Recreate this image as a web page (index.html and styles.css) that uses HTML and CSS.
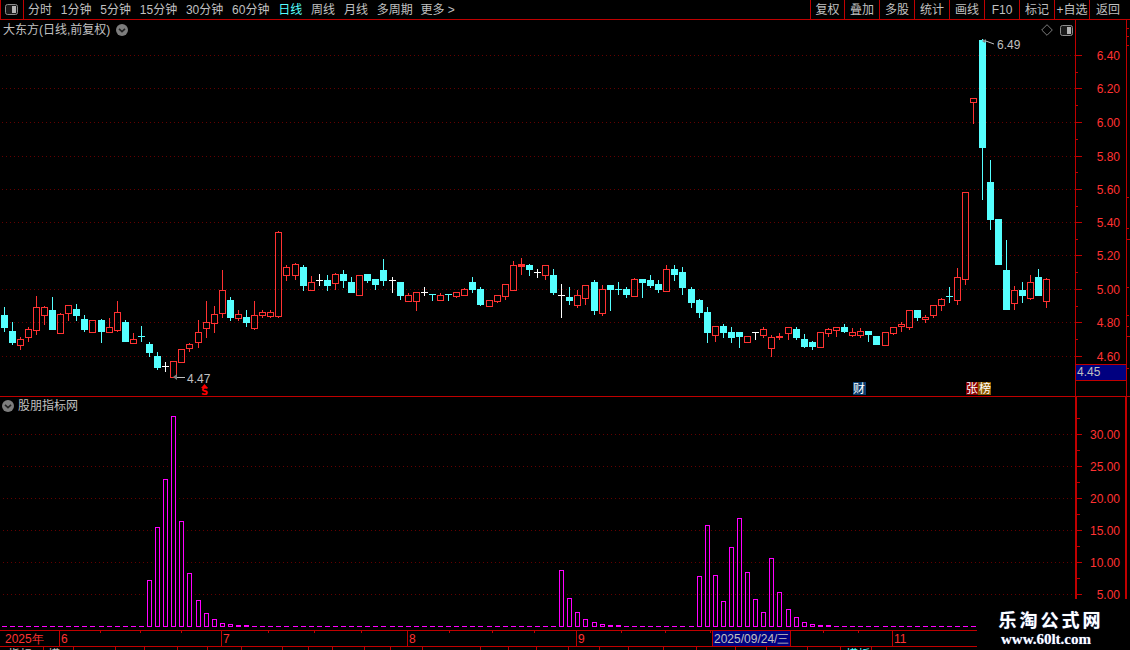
FILE: index.html
```html
<!DOCTYPE html>
<html lang="zh">
<head>
<meta charset="utf-8">
<title>大东方 日线</title>
<link rel="stylesheet" href="styles.css">
</head>
<body>
<div class="app">
  <header class="toolbar">
    <div class="toggle">
      <svg class="icon-pane" width="14" height="11" viewBox="0 0 14 11"><rect x="1.5" y="0.5" width="12" height="10" rx="2" fill="#1a1a1a" stroke="#8c8c8c"/><rect x="8" y="2" width="4" height="7" fill="#b4b4b4"/></svg>
    </div>
    <nav class="periods">
      <span>分时</span><span>1分钟</span><span>5分钟</span><span>15分钟</span><span>30分钟</span><span>60分钟</span>
      <span class="active">日线</span><span>周线</span><span>月线</span><span>多周期</span><span class="more">更多 &gt;</span>
    </nav>
    <div class="actions">
      <span class="first">复权</span><span>叠加</span><span>多股</span><span>统计</span><span>画线</span><span>F10</span><span>标记</span><span>+自选</span><span class="last">返回</span>
    </div>
  </header>

  <section class="panel price">
    <svg id="price" class="chart" width="1130" height="376" viewBox="0 20 1130 376"></svg>
    <div class="title title-price">
      <span>大东方(日线,前复权)</span>
      <svg class="chev" width="12" height="12" viewBox="0 0 12 12"><circle cx="6" cy="6" r="6" fill="#7d7d7d"/><path d="M3 4.8 6 7.6 9 4.8" fill="none" stroke="#222" stroke-width="1.6"/></svg>
    </div>
    <div class="corner">
      <svg width="12" height="12" viewBox="0 0 12 12"><path d="M6 .7 11.3 6 6 11.3 .7 6Z" fill="none" stroke="#7d7d7d"/></svg>
      <svg width="13" height="11" viewBox="0 0 13 11"><rect x="0.5" y="0.5" width="12" height="10" rx="2" fill="#1a1a1a" stroke="#8c8c8c"/><rect x="7" y="2" width="4" height="7" fill="#b4b4b4"/></svg>
    </div>
  </section>

  <section class="panel indicator">
    <svg id="indicator" class="chart" width="1130" height="233" viewBox="0 397 1130 233"></svg>
    <div class="title title-indicator">
      <svg class="chev" width="12" height="12" viewBox="0 0 12 12"><circle cx="6" cy="6" r="6" fill="#7d7d7d"/><path d="M3 4.8 6 7.6 9 4.8" fill="none" stroke="#222" stroke-width="1.6"/></svg>
      <span>股朋指标网</span>
    </div>
  </section>

  <section class="panel time">
    <svg id="time" class="chart" width="1130" height="20" viewBox="0 630 1130 20"></svg>
  </section>

  <aside class="watermark">
    <div class="wm-name">乐淘公式网</div>
    <div class="wm-url">www.60lt.com</div>
  </aside>
</div>
<script src="chart.js"></script>
</body>
</html>
```
FILE: styles.css
```css
html, body {
  margin: 0;
  padding: 0;
  background: #000;
}
body {
  width: 1130px;
  height: 650px;
  overflow: hidden;
  font-family: "Liberation Sans", "Noto Sans CJK SC", sans-serif;
  font-size: 12px;
  color: #c0c0c0;
}
.app {
  position: relative;
  display: flex;
  flex-direction: column;
  width: 1130px;
  height: 650px;
}
.toolbar {
  display: flex;
  align-items: stretch;
  height: 19px;
  line-height: 20px;
  border-bottom: 1px solid #c00000;
  white-space: nowrap;
}
.toggle {
  display: flex;
  align-items: center;
  justify-content: center;
  width: 22px;
  border-left: 1px solid #c00000;
  border-right: 1px solid #c00000;
}
.icon-pane {
  margin-left: -2px;
}
.periods {
  display: flex;
  gap: 8.8px;
  padding-left: 4px;
}
.periods .active {
  color: #55ffff;
}
.periods .more {
  margin-left: -1px;
}
.actions {
  display: flex;
  margin-left: auto;
}
.actions span {
  width: 34px;
  text-align: center;
  border-left: 1px solid #c00000;
}
.actions .first {
  width: 33px;
}
.actions .last {
  width: 36px;
  padding-right: 4px;
}
.panel {
  position: relative;
}
.chart {
  display: block;
}
.price {
  height: 376px;
  border-bottom: 1px solid #c00000;
}
.indicator {
  height: 233px;
}
.time {
  height: 20px;
}
.title {
  position: absolute;
  display: flex;
  align-items: center;
  height: 14px;
  line-height: 14px;
}
.title-price {
  left: 3px;
  top: 3px;
  gap: 6px;
}
.title-indicator {
  left: 2px;
  top: 2px;
  gap: 4px;
}
.corner {
  position: absolute;
  left: 1041px;
  top: 4px;
  display: flex;
  align-items: center;
  gap: 7px;
}
.watermark {
  position: absolute;
  left: 977px;
  top: 599px;
  width: 153px;
  height: 51px;
  background: #000;
  color: #fff;
  text-align: center;
}
.wm-name {
  margin-top: 9px;
  padding-right: 5px;
  font-family: "Noto Sans CJK SC", sans-serif;
  font-size: 18px;
  font-weight: 700;
  line-height: 22px;
  letter-spacing: 3px;
  text-shadow: 0 0 1px #5a78c8;
}
.wm-url {
  margin-top: 1px;
  padding-right: 15px;
  font-family: "Liberation Serif", serif;
  font-size: 15px;
  font-weight: 700;
  line-height: 17px;
  text-shadow: 0 0 1px #5a78c8;
}
.ax {
  font-family: "Liberation Sans", sans-serif;
  font-size: 12px;
  fill: #ff3232;
}
.note {
  font-family: "Liberation Sans", sans-serif;
  font-size: 12px;
  fill: #c0c0c0;
}
.badge {
  font-family: "Noto Sans CJK SC", sans-serif;
  font-size: 12px;
  fill: #fff;
}
.sig {
  font-family: "DejaVu Sans", sans-serif;
  font-size: 10px;
  font-weight: 700;
  fill: #ff0000;
}
.tab {
  font-family: "Noto Sans CJK SC", sans-serif;
  font-size: 12px;
  fill: #c0c0c0;
}
.tab-on {
  fill: #55ffff;
}
```
FILE: chart.js
```js
var RED = '#ff3232', CYAN = '#55ffff', WHITE = '#ffffff', MAG = '#ff00ff';
var LINE = '#c00000', DOT = '#640000';

// [type, body top, body bottom, wick top, wick bottom]; r hollow red, c cyan, w white cross, d cyan cross, s solid red
var candles = [
['c',315,327,307,331],['c',331,342,322,344],['r',339,345,337,349],['r',329,337,327,341],['r',307,330,296,334],
['r',307,315,306,324],['c',310,329,297,329],['r',314,333,313,333],['r',305,313,305,320],['c',309,315,304,320],
['c',319,329,315,331],['r',320,332,320,332],['c',320,331,319,342],['r',327,332,318,332],['r',312,330,301,331],
['c',322,341,320,341],['r',339,343,333,343],['d',336,336,326,341],['c',344,352,342,356],['c',356,367,352,369],
['w',366,366,362,371],['r',361,377,361,377],['r',349,362,349,362],['r',344,348,343,351],['r',332,342,320,347],
['r',322,328,301,337],['r',314,323,306,332],['r',290,313,270,317],['c',300,317,297,320],['r',314,318,310,320],
['c',317,322,310,326],['r',315,328,301,329],['r',312,315,310,317],['r',312,316,310,317],['r',232,316,231,317],
['r',267,275,265,280],['r',264,275,263,279],['c',267,285,265,290],['r',282,290,276,290],['w',280,280,274,285],
['c',280,285,275,290],['r',274,283,273,289],['c',274,280,270,287],['c',282,292,277,292],['r',275,295,275,295],
['c',274,280,274,282],['c',279,284,279,289],['c',270,280,259,285],['w',280,280,277,292],['c',282,295,282,299],
['r',295,301,293,301],['r',292,301,292,310],['w',292,292,287,295],['d',294,294,294,300],['r',295,300,293,300],
['d',294,294,294,300],['r',292,296,292,297],['r',289,295,288,295],['c',282,289,277,292],['c',289,304,287,305],
['r',300,306,300,306],['r',295,301,295,302],['r',284,296,284,299],['r',265,290,261,290],['s',264,266,258,274],
['c',265,269,264,275],['w',272,272,269,277],['r',265,275,265,279],['c',275,292,269,294],['w',295,295,284,317],
['c',297,300,287,304],['r',295,305,290,307],['r',285,298,285,304],['c',282,310,280,314],['r',289,313,285,315],
['c',285,289,285,310],['d',289,289,282,294],['c',289,294,287,297],['r',279,296,278,296],['c',279,282,279,297],
['c',280,285,275,287],['c',284,289,280,292],['r',269,291,265,291],['c',269,274,265,280],['c',272,287,267,294],
['c',289,302,287,307],['c',300,312,299,317],['c',312,332,307,342],['r',326,335,326,341],['c',326,332,324,337],
['c',332,337,327,342],['c',332,336,332,347],['r',336,342,336,342],['w',332,332,332,339],['r',329,335,327,337],
['r',337,348,335,356],['s',336,337,333,339],['r',327,333,327,339],['c',329,337,327,339],['c',339,346,334,347],
['c',342,346,341,349],['r',332,347,332,347],['r',329,333,328,336],['r',327,330,327,336],['c',327,331,324,332],
['r',332,335,328,336],['r',331,335,328,337],['c',331,334,331,341],['c',336,344,336,344],['r',332,345,332,345],
['r',327,333,327,334],['r',324,326,322,331],['r',310,327,310,329],['c',310,317,310,320],['r',317,319,315,322],
['r',305,315,305,317],['r',299,305,298,310],['d',296,296,287,302],['r',277,300,268,304],['r',192,279,192,284],
['r',98,102,98,123],['c',40,147,39,199],['c',182,219,160,229],['c',219,264,219,264],['c',270,309,240,309],
['r',290,303,286,309],['c',290,295,282,302],['r',282,298,275,299],['c',277,295,269,295],['r',279,301,278,307]
];

// top row of each indicator bar, by candle index (others are flat at the baseline)
var bars = {18:580,19:527,20:479,21:416,22:521,23:573,24:600,25:613,26:619,27:623,28:624,29:625,30:625,
69:570,70:598,71:612,72:619,73:622,74:624,75:625,76:625,
86:576,87:525,88:575,89:601,90:547,91:518,92:572,93:599,94:612,95:558,96:592,97:609,98:617,99:622,100:624,101:625,102:625};

function cx(i) { return 4 + 8 * i + (i < 61 ? Math.floor(i / 12) : Math.floor((i - 1) / 12)); }
function R(x, y, w, h, f) { return '<rect x="' + x + '" y="' + y + '" width="' + w + '" height="' + h + '" fill="' + f + '"/>'; }
function box(x, y, w, h, s) { return '<rect x="' + (x + .5) + '" y="' + (y + .5) + '" width="' + w + '" height="' + h + '" fill="none" stroke="' + s + '"/>'; }
function T(x, y, s, c, extra) { return '<text x="' + x + '" y="' + y + '" class="' + c + '"' + (extra || '') + '>' + s + '</text>'; }
function dots(y, x0, x1) { var o = ''; for (var x = x0; x < x1; x += 4) o += R(x, y, 1, 1, DOT); return o; }

function drawPrice() {
  var o = '', g = [[55,'6.40'],[88,'6.20'],[122,'6.00'],[156,'5.80'],[189,'5.60'],[222,'5.40'],[255,'5.20'],[289,'5.00'],[322,'4.80'],[356,'4.60']];
  g.forEach(function (p) {
    o += dots(p[0], 2, 1075);
    o += R(1075, p[0], 7, 1, LINE);
    o += T(1120, p[0] + 5, p[1], 'ax', ' text-anchor="end"');
  });
  [72,105,139,172,206,239,272,306,339].forEach(function (y) { o += R(1075, y, 3, 1, LINE); });
  o += R(1075, 20, 1, 376, LINE) + R(1126, 20, 1, 376, LINE);
  [28,36,45,197,228,287,315,326,368].forEach(function (y) { o += R(1127, y, 2, 1, LINE); });
  o += R(1127, 239, 3, 1, LINE) + R(1127, 336, 3, 1, LINE);

  candles.forEach(function (c, i) {
    var x = cx(i), t = c[0];
    if (t === 'c') {
      o += R(x, c[3], 1, c[4] - c[3] + 1, CYAN) + R(x - 3, c[1], 7, c[2] - c[1] + 1, CYAN);
    } else if (t === 'r') {
      if (c[3] < c[1]) o += R(x, c[3], 1, c[1] - c[3], RED);
      if (c[4] > c[2]) o += R(x, c[2], 1, c[4] - c[2] + 1, RED);
      o += box(x - 3, c[1], 6, c[2] - c[1], RED);
    } else if (t === 's') {
      o += R(x, c[3], 1, c[4] - c[3] + 1, RED) + R(x - 3, c[1], 7, c[2] - c[1] + 1, RED);
    } else {
      var col = t === 'w' ? WHITE : CYAN;
      o += R(x, c[3], 1, c[4] - c[3] + 1, col) + R(x - 3, c[1], 7, 1, col);
    }
  });

  // low and high notes
  o += R(175, 377, 10, 1, '#c0c0c0') + '<path d="M173 377 177 374 177 380Z" fill="#808080"/>';
  o += T(187, 383, '4.47', 'note');
  o += '<path d="M983 40 994 44" stroke="#c0c0c0" fill="none"/><path d="M982 41 986 39 985 43Z" fill="#808080"/>';
  o += T(997, 49, '6.49', 'note');

  // S signal
  o += '<path d="M204.5 384 208 388 201 388Z" fill="#ff0000"/>' + T(201, 395, 'S', 'sig');

  // event badges
  o += R(853, 382, 13, 13, '#0a3c6e') + T(853, 393, '财', 'badge');
  o += R(966, 382, 12, 13, '#8a0000') + T(966, 393, '张', 'badge');
  o += R(978, 382, 13, 13, '#8c5a00') + T(979, 393, '榜', 'badge');

  // latest price box
  o += R(1076, 364, 50, 1, LINE) + R(1076, 380, 50, 1, LINE) + R(1076, 365, 50, 15, '#000080');
  o += T(1077, 376, '4.45', 'note');
  document.getElementById('price').innerHTML = o;
}

function drawIndicator() {
  var o = '', g = [[434,'30.00'],[466,'25.00'],[498,'20.00'],[530,'15.00'],[562,'10.00'],[594,'5.00']];
  g.forEach(function (p) {
    o += dots(p[0], 3, 1075);
    o += R(1077, p[0], 5, 1, LINE);
    o += T(1120, p[0] + 5, p[1], 'ax', ' text-anchor="end"');
  });
  [418,450,482,514,546,578].forEach(function (y) { o += R(1077, y, 3, 1, LINE); });
  o += R(1075, 397, 2, 202, LINE) + R(1125, 397, 2, 202, LINE);
  for (var i = 0; i <= 120; i++) {
    var x = cx(i) - 2, top = bars[i];
    if (!top) o += R(x, 626, 5, 1, MAG);
    else if (top >= 625) o += R(x, 625, 5, 2, MAG);
    else o += box(x, top, 4, 626 - top, MAG);
  }
  document.getElementById('indicator').innerHTML = o;
}

function drawTime() {
  var o = R(0, 630, 977, 1, LINE) + R(0, 646, 977, 1, LINE);
  [[59,'6'],[221,'7'],[407,'8'],[576,'9'],[892,'11']].forEach(function (m) {
    o += R(m[0], 630, 1, 16, LINE);
    o += T(m[0] + 2, 643, m[1], 'ax');
  });
  o += T(5, 643, '2025年', 'ax');
  [100,140,181,268,314,361,449,492,534,621,665,710,823,858].forEach(function (x) { o += R(x, 631, 1, 2, LINE); });
  [43,73,115,144,177,207,241,282,308,332,364,390,422,480,508,536,568,599,628,663,696,735,766,807,840,871].forEach(function (x) { o += R(x, 647, 1, 3, LINE); });
  o += R(712, 631, 78, 15, '#000080') + R(712, 630, 1, 16, LINE) + R(790, 630, 1, 16, LINE);
  o += T(714, 643, '2025/09/24/三', 'note');
  o += T(8, 659, '指标', 'tab') + T(48, 659, '模', 'tab') + T(846, 659, '模板', 'tab tab-on');
  document.getElementById('time').innerHTML = o;
}

drawPrice();
drawIndicator();
drawTime();
```
